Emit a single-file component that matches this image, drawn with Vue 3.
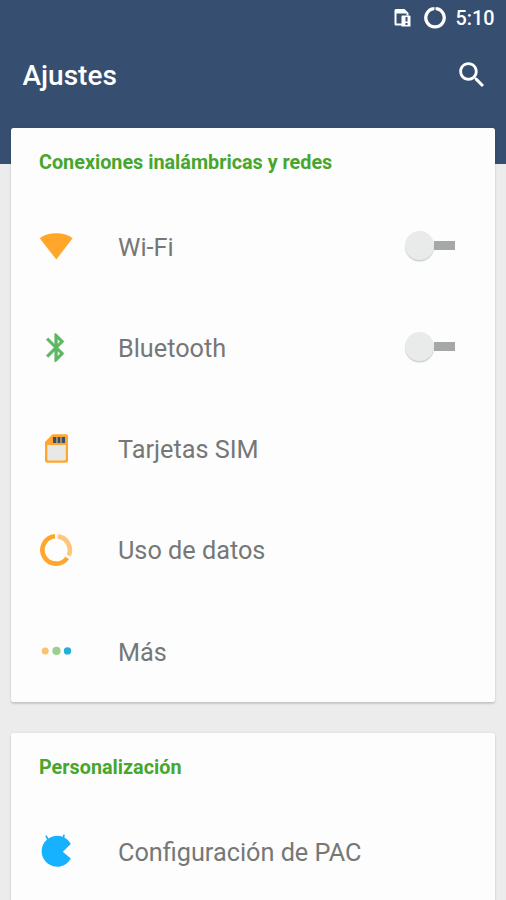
<script setup>
import { ref } from 'vue'

const sections = ref([
  {
    title: 'Conexiones inalámbricas y redes',
    kind: 'networks',
    items: [
      { icon: 'wifi', label: 'Wi-Fi', toggle: true },
      { icon: 'bluetooth', label: 'Bluetooth', toggle: true },
      { icon: 'sim', label: 'Tarjetas SIM' },
      { icon: 'data', label: 'Uso de datos' },
      { icon: 'more', label: 'Más' },
    ],
  },
  {
    title: 'Personalización',
    kind: 'personal',
    items: [{ icon: 'pac', label: 'Configuración de PAC' }],
  },
])
</script>

<template>
  <div class="screen">
    <header class="header">
      <div class="status">
        <svg class="status-sim" width="18" height="20" viewBox="0 0 18 20">
          <path d="M2 1H10.500L14.500 5V7.500H12.500V5.500H2.500V15.500H8V17.500H2Q.5 17.500 .5 16V2.500Q.5 1 2 1Z" fill="#fff" />
          <path d="M8.500 7.500H15.500Q16.500 7.500 16.500 8.500V18.500H7.500V8.500Q7.500 7.500 8.500 7.500Z" fill="#fff" />
          <path d="M11.500 9H13.500V13.500H11.500ZM11.500 15H13.500V17H11.500Z" fill="#364e70" />
        </svg>
        <svg class="status-ring" width="24" height="24" viewBox="0 0 24 24">
          <path d="M13 2.550A9.200 9.200 0 1 1 11 2.550" fill="none" stroke="#fff" stroke-width="3.300" />
          <path d="M11 2.550A9.200 9.200 0 0 1 13 2.550" fill="none" stroke="#a5afbd" stroke-width="2.500" />
        </svg>
        <span class="clock">5:10</span>
      </div>
      <div class="toolbar">
        <h1>Ajustes</h1>
        <svg class="search" width="34" height="34" viewBox="0 0 24 24">
          <path
            fill="#fff"
            d="M15.500 14h-.79l-.28-.27C15.410 12.590 16 11.110 16 9.500 16 5.910 13.090 3 9.500 3S3 5.910 3 9.500 5.910 16 9.500 16c1.610 0 3.090-.59 4.230-1.570l.27.28v.79l5 4.990L20.490 19l-4.990-5zm-6 0C7.010 14 5 11.990 5 9.500S7.010 5 9.500 5 14 7.010 14 9.500 11.990 14 9.500 14z"
          />
        </svg>
      </div>
    </header>

    <main class="content">
      <section v-for="section in sections" :key="section.kind" class="card">
        <h2 :class="section.kind">{{ section.title }}</h2>
        <div v-for="item in section.items" :key="item.icon" class="row">
          <svg class="icon" width="36" height="36" viewBox="0 0 36 36">
            <path v-if="item.icon === 'wifi'" d="M1.700 10.200Q8 5.200 18.200 5.200T34.600 10.200L18.300 31.500Z" fill="#ffa62b" />
            <g v-else-if="item.icon === 'bluetooth'" transform="translate(1.200 .7) scale(1.406)">
              <path
                fill="#5cb860"
                stroke="#5cb860"
                stroke-width=".3"
                d="M17.710 7.710L12 2h-1v7.590L6.410 5 5 6.410 10.590 12 5 17.590 6.410 19 11 14.410V22h1l5.710-5.710-4.300-4.290 4.300-4.290zM13 5.830l1.880 1.880L13 9.590V5.830zm1.880 10.460L13 18.170v-3.760l1.880 1.880z"
              />
            </g>
            <g v-else-if="item.icon === 'sim'">
              <path d="M14.500 3.300H27.500Q30 3.300 30 5.800V29.200Q30 31.700 27.500 31.700H9.500Q7 31.700 7 29.200V11Z" fill="#ffa62b" />
              <path d="M9.300 14H27.800V28Q27.800 29.400 26.600 29.400H10.500Q9.300 29.400 9.300 28Z" fill="#e8e9e7" />
              <path d="M15 6H18V12H15ZM19.500 6H22.500V12H19.500ZM24 6H27V12H24Z" fill="#364e70" />
              <path d="M18 6H19.500V12H18ZM22.500 6H24V12H22.500Z" fill="#a68d70" />
            </g>
            <g v-else-if="item.icon === 'data'" fill="none" stroke-width="4.600">
              <path d="M17 4.300A13.700 13.700 0 1 0 29.200 26" stroke="#ffa62b" />
              <path d="M20 4.400A13.700 13.700 0 0 1 30.700 23.500" stroke="#ffc57a" />
            </g>
            <g v-else-if="item.icon === 'more'">
              <circle cx="7.200" cy="17.900" r="3.500" fill="#fdc16c" />
              <circle cx="18.500" cy="17.900" r="4.100" fill="#9bcf91" />
              <circle cx="29.500" cy="17.900" r="3.700" fill="#1fb0dd" />
            </g>
            <g v-else>
              <path d="M24.800 18.700L32.800 10.900A15.500 15.500 0 1 0 32.800 25.500Z" fill="#16b1ff" />
              <path d="M8 2.600L10.500 8M26 1.600L25 7" stroke="#16b1ff" stroke-width="1.700" />
            </g>
          </svg>
          <span class="label">{{ item.label }}</span>
          <span v-if="item.toggle" class="switch">
            <span class="thumb"></span>
            <span class="track"></span>
          </span>
        </div>
      </section>
    </main>
  </div>
</template>

<style>
body {
  margin: 0;
  background: #ececec;
}
</style>

<style scoped>
.screen {
  width: 506px;
  height: 900px;
  overflow: hidden;
  background: #ececec;
  font-family: Roboto, sans-serif;
}
.header {
  height: 164px;
  background: #364e70;
  color: #fff;
}
.status {
  display: flex;
  align-items: center;
  justify-content: flex-end;
  height: 36px;
  padding-right: 11.500px;
}
.status-sim {
  margin-right: 11px;
}
.status-ring {
  margin-right: 9px;
}
.clock {
  padding-top: 2px;
  font-size: 19.800px;
  font-weight: 500;
  line-height: 36px;
}
.toolbar {
  display: flex;
  align-items: center;
  justify-content: space-between;
  height: 78px;
  padding: 0 17px 0 22.500px;
}
h1 {
  margin: 0;
  font-size: 28px;
  font-weight: 500;
}
.content {
  display: flex;
  flex-direction: column;
  gap: 31px;
  margin-top: -36px;
  padding: 0 11.500px 0 11px;
}
.card {
  border-radius: 2.500px;
  background: #fdfdfd;
  box-shadow: 0 2px 2px rgba(70, 90, 80, 0.22), 0 0 3px rgba(0, 0, 0, 0.07);
}
h2 {
  height: 67.750px;
  margin: 0;
  padding-left: 28px;
  color: #47a62e;
  font-size: 19.800px;
  font-weight: 700;
  line-height: 69px;
}
.row {
  display: flex;
  align-items: center;
  height: 101.250px;
  padding: 0 39.500px 0 27px;
}
.icon {
  flex: none;
  margin-right: 44px;
}
.label {
  flex: 1;
  padding-top: 2.400px;
  color: #757877;
  font-size: 25.250px;
  line-height: 36px;
}
.switch {
  display: flex;
  align-items: center;
  width: 50px;
  padding-bottom: 1.500px;
}
.thumb {
  width: 29px;
  height: 29px;
  border-radius: 50%;
  background: #e9ebea;
  box-shadow: 0 1.500px 1px #cbd2ce;
}
.track {
  width: 21px;
  height: 9px;
  background: #a6a8a8;
}
</style>
